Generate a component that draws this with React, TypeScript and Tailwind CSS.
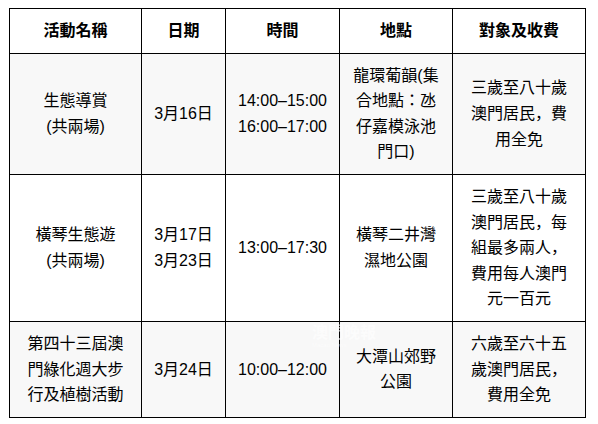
import React from "react";

const font = {
  fontFamily: '"Liberation Sans", "Noto Sans CJK JP", sans-serif',
};

type Row = {
  name: string[];
  date: string[];
  time: string[];
  place: string[];
  fee: string[];
  gray: boolean;
};

const rows: Row[] = [
  {
    name: ["生態導賞", "(共兩場)"],
    date: ["3月16日"],
    time: ["14:00–15:00", "16:00–17:00"],
    place: ["龍環葡韻(集", "合地點：氹", "仔嘉模泳池", "門口)"],
    fee: ["三歲至八十歲", "澳門居民，費", "用全免"],
    gray: true,
  },
  {
    name: ["橫琴生態遊", "(共兩場)"],
    date: ["3月17日", "3月23日"],
    time: ["13:00–17:30"],
    place: ["橫琴二井灣", "濕地公園"],
    fee: ["三歲至八十歲", "澳門居民，每", "組最多兩人，", "費用每人澳門", "元一百元"],
    gray: false,
  },
  {
    name: ["第四十三屆澳", "門綠化週大步", "行及植樹活動"],
    date: ["3月24日"],
    time: ["10:00–12:00"],
    place: ["大潭山郊野", "公園"],
    fee: ["六歲至六十五", "歲澳門居民，", "費用全免"],
    gray: true,
  },
];

function Lines({ items }: { items: string[] }) {
  return (
    <>
      {items.map((t, i) => (
        <div key={i}>{t}</div>
      ))}
    </>
  );
}

const td = "border border-black px-3 py-[9px] text-center align-middle";

export default function App() {
  return (
    <div className="w-[598px] h-[424px] bg-white pt-2 pl-[9px]" style={font}>
      <div className="relative w-[576px]">
        <table className="w-[576px] table-fixed border-collapse text-[16px] leading-[25.6px] text-black">
          <colgroup>
            <col className="w-[132px]" />
            <col className="w-[84px]" />
            <col className="w-[114px]" />
            <col className="w-[113px]" />
            <col className="w-[133px]" />
          </colgroup>
          <thead>
            <tr className="bg-white font-bold">
              <th className={td}>活動名稱</th>
              <th className={td}>日期</th>
              <th className={td}>時間</th>
              <th className={td}>地點</th>
              <th className={td}>對象及收費</th>
            </tr>
          </thead>
          <tbody>
            {rows.map((r, i) => (
              <tr key={i} className={r.gray ? "bg-[#f8f8f8]" : "bg-white"}>
                <td className={td}>
                  <Lines items={r.name} />
                </td>
                <td className={td}>
                  <Lines items={r.date} />
                </td>
                <td className={td}>
                  <Lines items={r.time} />
                </td>
                <td className={td}>
                  <Lines items={r.place} />
                </td>
                <td className={td}>
                  <Lines items={r.fee} />
                </td>
              </tr>
            ))}
          </tbody>
        </table>
        <div className="pointer-events-none absolute left-[303px] top-[315px] flex flex-col items-start text-white opacity-60">
          <div className="text-[16px] font-bold leading-[19px]">澳門晚報</div>
          <div className="text-[6px] leading-[7px]">Macao News</div>
        </div>
      </div>
    </div>
  );
}
